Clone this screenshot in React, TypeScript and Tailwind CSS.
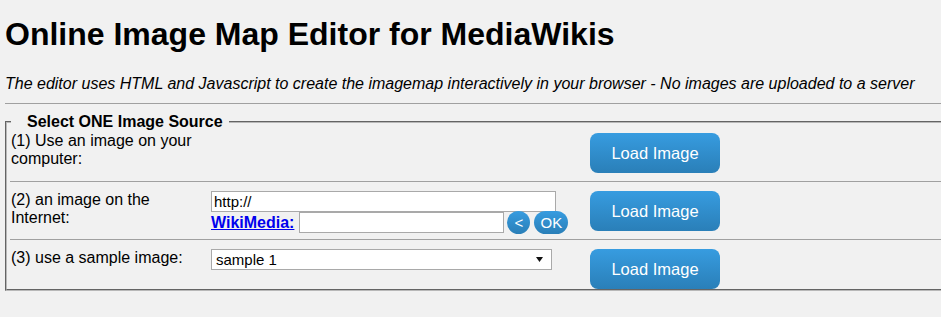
import React from "react";

function LoadButton({ className = "" }: { className?: string }) {
  return (
    <button
      type="button"
      className={
        "w-[130px] h-[40px] rounded-[8px] bg-linear-to-b from-[#379ce0] to-[#2a7fb8] text-white text-[16.5px] leading-none " +
        className
      }
    >
      Load Image
    </button>
  );
}

export default function App() {
  return (
    <div className="w-full h-[317px] overflow-hidden bg-[#f1f1f1] text-black font-['Liberation_Sans',Arial,sans-serif]">
      <div className="w-[1100px] pl-[5px] pt-[16px]">
        <h1 className="text-[32px] leading-[37px] font-bold">Online Image Map Editor for MediaWikis</h1>
        <p className="mt-[22px] text-[16px] leading-[18px] italic">
          The editor uses HTML and Javascript to create the imagemap interactively in your browser - No images are
          uploaded to a server
        </p>
        <div className="mt-[10px] h-px bg-[#a0a0a0]" />
        <fieldset className="mt-[9px] w-[1000px] border-2 [border-style:groove] border-[#b8b8b8] pl-[3px] pb-0 text-[16px] leading-[18px]">
          <legend className="ml-[1px] pl-[16px] pr-[6px] font-bold">Select ONE Image Source</legend>

          <div className="grid grid-cols-[201px_379px_1fr] h-[42px]">
            <div className="pl-[1px] pt-[1px]">(1) Use an image on your computer:</div>
            <div />
            <div className="pt-[2px]">
              <LoadButton />
            </div>
          </div>

          <div className="mt-[8px] h-px bg-[#a0a0a0]" />

          <div className="mt-[8px] grid grid-cols-[201px_379px_1fr] h-[41px]">
            <div className="pl-[1px] pt-[1px]">(2) an image on the Internet:</div>
            <div className="flex flex-col pt-[1px]">
              <input
                defaultValue="http://"
                className="w-[345px] h-[21px] border border-[#a9a9a9] bg-white px-[2px] text-[15px] leading-none outline-none"
              />
              <div className="-mt-px flex h-[23px] items-center">
                <a href="#" className="font-bold text-[#0000ee] underline">
                  WikiMedia:
                </a>
                <input className="ml-[5px] w-[205px] h-[21px] border border-[#a9a9a9] bg-white px-[2px] text-[15px] leading-none outline-none" />
                <button
                  type="button"
                  className="ml-[3px] w-[23px] h-[23px] rounded-full bg-linear-to-b from-[#379ce0] to-[#2a7fb8] text-white text-[15px] leading-none"
                >
                  &lt;
                </button>
                <button
                  type="button"
                  className="ml-[4px] w-[34px] h-[23px] rounded-full bg-linear-to-b from-[#379ce0] to-[#2a7fb8] text-white text-[15px] leading-none"
                >
                  OK
                </button>
              </div>
            </div>
            <div className="pt-[1px]">
              <LoadButton />
            </div>
          </div>

          <div className="mt-[8px] h-px bg-[#a0a0a0]" />

          <div className="mt-[8px] grid grid-cols-[201px_379px_1fr] h-[41px]">
            <div className="pl-[1px] pt-[1px]">(3) use a sample image:</div>
            <div className="pt-[1px]">
              <div className="flex w-[341px] h-[21px] items-center justify-between border border-[#a9a9a9] bg-white pl-[4px] pr-[8px] text-[15px] leading-none">
                <span>sample 1</span>
                <svg width="7" height="5" viewBox="0 0 7 5">
                  <path d="M0 0 L7 0 L3.5 5 Z" fill="#111" />
                </svg>
              </div>
            </div>
            <div className="pt-[1px]">
              <LoadButton />
            </div>
          </div>
        </fieldset>
      </div>
    </div>
  );
}
